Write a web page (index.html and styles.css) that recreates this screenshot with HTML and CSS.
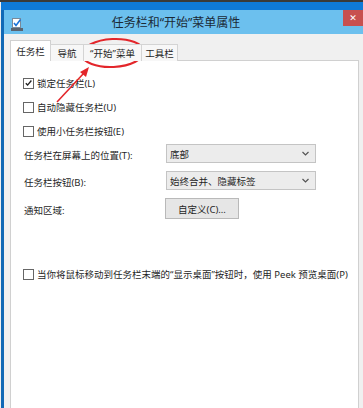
FILE: index.html
```html
<!DOCTYPE html>
<html lang="zh-CN">
<head>
<meta charset="utf-8">
<title>任务栏和“开始”菜单属性</title>
<link rel="stylesheet" href="styles.css">
</head>
<body>
<div class="topstrip"></div>
<div class="window">
  <div class="frametop"></div>
  <div class="titlebar">
    <svg class="appicon" width="12" height="13" viewBox="0 0 12 13">
      <rect x="1.5" y="0.5" width="8" height="9" fill="#ffffff" stroke="#7a8a9a"/>
      <path d="M3 5 L5 7.5 L9.5 1.5" fill="none" stroke="#1a73d9" stroke-width="1.6"/>
      <rect x="0" y="10" width="12" height="3" fill="#5a6470"/>
    </svg>
    <div class="title">任务栏和“开始”菜单属性</div>
    <div class="close">✕</div>
  </div>
  <div class="body">
    <div class="tabs">
      <div class="tab active">任务栏</div>
      <div class="tab">导航</div>
      <div class="tab">“开始”菜单</div>
      <div class="tab">工具栏</div>
    </div>
    <div class="panel">
      <div class="checks">
        <div class="check"><span class="box checked"><svg width="10" height="10" viewBox="0 0 10 10"><path d="M2 5.2 L4 7.3 L8.2 2.2" fill="none" stroke="#222" stroke-width="1.5"/></svg></span>锁定任务栏(L)</div>
        <div class="check"><span class="box"></span>自动隐藏任务栏(U)</div>
        <div class="check"><span class="box"></span>使用小任务栏按钮(E)</div>
      </div>
      <div class="form">
        <div class="label">任务栏在屏幕上的位置(T):</div>
        <div class="select"><span>底部</span><svg class="chev" width="7" height="5" viewBox="0 0 7 5"><path d="M0.5 1 L3.5 4 L6.5 1" fill="none" stroke="#555" stroke-width="1.2"/></svg></div>
        <div class="label">任务栏按钮(B):</div>
        <div class="select"><span>始终合并、隐藏标签</span><svg class="chev" width="7" height="5" viewBox="0 0 7 5"><path d="M0.5 1 L3.5 4 L6.5 1" fill="none" stroke="#555" stroke-width="1.2"/></svg></div>
        <div class="label">通知区域:</div>
        <div class="btnwrap"><div class="button">自定义(C)...</div></div>
      </div>
      <div class="check peek"><span class="box"></span>当你将鼠标移动到任务栏末端的“显示桌面”按钮时，使用 Peek 预览桌面(P)</div>
    </div>
  </div>
</div>
<svg class="annot" width="363" height="408" viewBox="0 0 363 408">
  <ellipse cx="113" cy="53" rx="31" ry="14" transform="rotate(-3 113 53)" fill="none" stroke="#e3262b" stroke-width="2"/>
  <line x1="57" y1="102" x2="84" y2="73" stroke="#e3262b" stroke-width="1.6"/>
  <polygon points="89,67 80,72 86,77" fill="#e3262b"/>
</svg>
</body>
</html>
```

FILE: styles.css
```css
html, body {
  margin: 0;
  padding: 0;
}
body {
  width: 363px;
  height: 408px;
  overflow: hidden;
  background: #f0f0f0;
  font-family: "Noto Sans", "Noto Sans CJK SC", sans-serif;
  color: #1f1f1f;
  position: relative;
}
.topstrip {
  height: 2px;
  background: #3a3a3a;
}
.window {
  margin-left: 1px;
  border-left: 3px solid #1169b6;
  height: 406px;
  display: flex;
  flex-direction: column;
}
.frametop {
  height: 8px;
  background: #0f7ad8;
  margin-left: -3px;
}
.titlebar {
  height: 24px;
  background: #6cc0ee;
  display: flex;
  align-items: center;
  position: relative;
}
.appicon {
  margin-left: 7px;
  margin-top: 4px;
}
.title {
  flex: 1;
  text-align: center;
  font-size: 12px;
  color: #1b2a36;
  margin-right: 34px;
}
.close {
  position: absolute;
  right: 0;
  top: 0;
  width: 20px;
  height: 16px;
  background: #c8504f;
  color: #fff;
  font-size: 9px;
  font-weight: bold;
  display: flex;
  align-items: center;
  justify-content: center;
  font-family: "DejaVu Sans", sans-serif;
}
.body {
  flex: 1;
  background: #f0f0f0;
  padding: 7px 4px 0 6px;
  display: flex;
  flex-direction: column;
}
.tabs {
  display: flex;
  align-items: flex-end;
  height: 20px;
  position: relative;
  z-index: 1;
  margin-bottom: -1px;
}
.tab {
  height: 17px;
  box-sizing: border-box;
  border: 1px solid #d4d4d4;
  border-bottom: none;
  margin-left: -1px;
  background: #f7f7f7;
  font-size: 9.5px;
  padding: 0;
  white-space: nowrap;
  display: flex;
  align-items: center;
  justify-content: center;
}
.tab:nth-child(2) { width: 34px; }
.tab:nth-child(3) { width: 59px; }
.tab:nth-child(4) { width: 37px; }
.tab.active {
  margin-left: 0;
  width: 41px;
  height: 21px;
  background: #ffffff;
  border-color: #d0d0d0;
  padding-bottom: 1px;
}
.panel {
  flex: 1;
  background: #ffffff;
  border: 1px solid #d0d0d0;
  border-bottom: none;
  padding: 10px 12px 0 12px;
  font-size: 9.5px;
}
.checks {
  display: flex;
  flex-direction: column;
}
.check {
  height: 24px;
  display: flex;
  align-items: center;
  white-space: nowrap;
}
.box {
  width: 9px;
  height: 9px;
  border: 1px solid #666;
  background: #fff;
  margin-right: 3px;
  display: inline-flex;
  align-items: center;
  justify-content: center;
  flex: none;
}
.box svg {
  display: block;
}
.form {
  margin-top: 1px;
  display: grid;
  grid-template-columns: 143px 150px;
  grid-template-rows: 19px 19px 21px;
  row-gap: 8px;
  align-items: center;
}
.label {
  padding-left: 1px;
  padding-top: 2px;
}
.select {
  height: 19px;
  box-sizing: border-box;
  border: 1px solid #c4c4c4;
  background: #ececec;
  display: flex;
  align-items: center;
  justify-content: space-between;
  padding: 0 6px 0 3px;
}
.chev {
  display: block;
}
.btnwrap {
  display: flex;
  margin-left: -1px;
}
.button {
  width: 74px;
  height: 21px;
  box-sizing: border-box;
  border: 1px solid #b9b9b9;
  background: #e6e6e6;
  display: flex;
  align-items: center;
  justify-content: center;
}
.peek {
  margin-top: 43px;
}
.annot {
  position: absolute;
  left: 0;
  top: 0;
  pointer-events: none;
}
```
